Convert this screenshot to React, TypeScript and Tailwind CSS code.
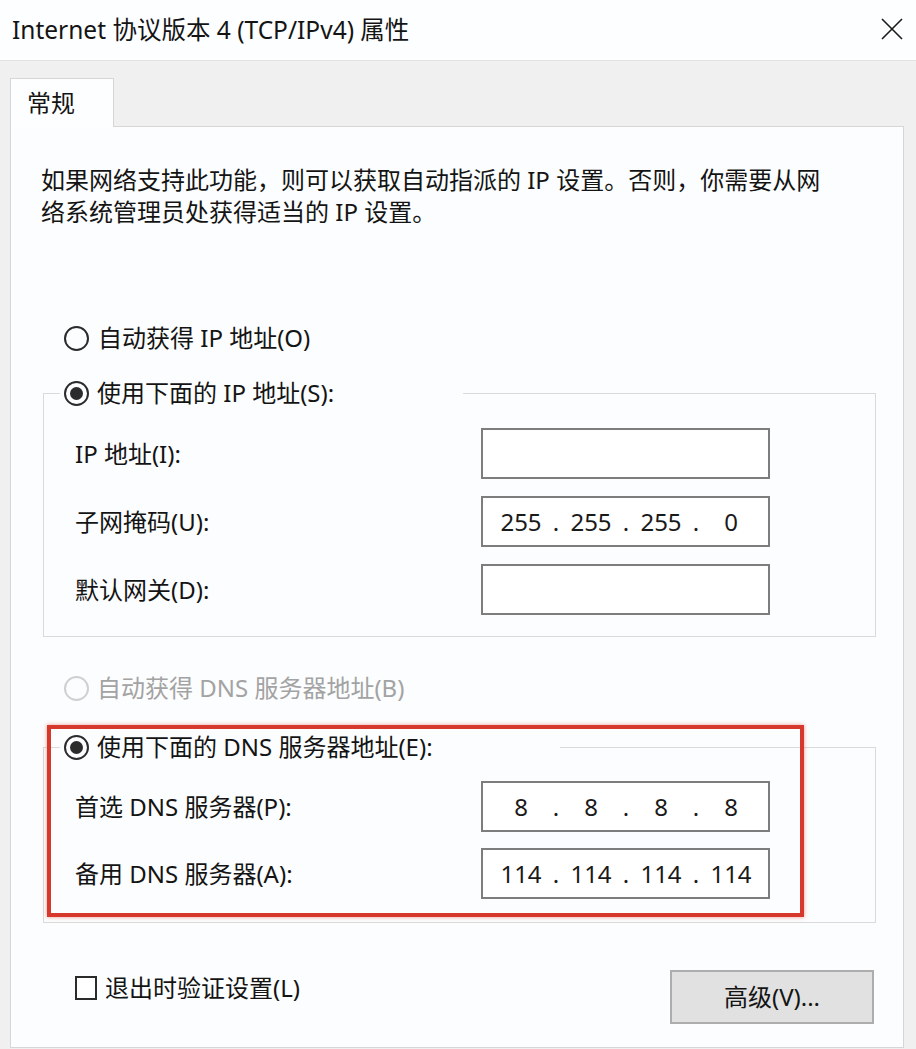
import React from "react";

const FONT = { fontFamily: '"Noto Sans", "Noto Sans CJK SC", sans-serif' };

function Radio({ checked, disabled }: { checked?: boolean; disabled?: boolean }) {
  return (
    <span
      className={
        "flex h-[25px] w-[25px] shrink-0 items-center justify-center rounded-full border-2 " +
        (disabled ? "border-[#d0d0d0]" : "border-[#2b2b2b]")
      }
    >
      {checked && <span className="h-[13px] w-[13px] rounded-full bg-[#2b2b2b]" />}
    </span>
  );
}

function IpBox({ parts }: { parts?: string[] }) {
  return (
    <div className="flex h-[51px] w-[289px] items-center border-2 border-[#7d7d7d] bg-white pl-[10px] text-[24px] text-[#1a1a1a]">
      {parts &&
        parts.map((p, i) => (
          <React.Fragment key={i}>
            <span className="w-[56px] text-center">{p}</span>
            {i < 3 && <span className="w-[14px] text-center">.</span>}
          </React.Fragment>
        ))}
    </div>
  );
}

function Row({ label, parts }: { label: string; parts?: string[] }) {
  return (
    <div className="flex h-[51px] items-center">
      <span className="w-[406px]">{label}</span>
      <IpBox parts={parts} />
    </div>
  );
}

export default function App() {
  return (
    <div
      className="flex h-[1049px] w-[916px] flex-col overflow-hidden bg-[#f0f0f0] text-[24px] leading-[30px] text-[#141414]"
      style={FONT}
    >
      {/* Title bar */}
      <div className="flex h-[61px] shrink-0 items-center justify-between border-b border-[#e2e2e2] bg-[#fdfeff] pl-[12px] pr-[13px]">
        <span className="text-[24.5px]">Internet 协议版本 4 (TCP/IPv4) 属性</span>
        <svg width="22" height="22" viewBox="0 0 22 22" className="mt-[-2px]">
          <path d="M1 1 L21 21 M21 1 L1 21" stroke="#1a1a1a" strokeWidth="1.6" fill="none" />
        </svg>
      </div>

      {/* Tab strip */}
      <div className="flex shrink-0 pl-[10px] pt-[17px]">
        <div className="relative z-10 -mb-px flex h-[49px] w-[104px] items-center border border-b-0 border-[#d6d6d6] bg-[#fdfeff] pl-[16px]">
          常规
        </div>
      </div>

      {/* Panel */}
      <div className="relative mb-px ml-[10px] flex w-[894px] flex-1 flex-col border border-[#d6d6d6] bg-[#fcfdfe]">
        <p className="pl-[30px] pt-[37px] leading-[32px]">
          如果网络支持此功能，则可以获取自动指派的 IP 设置。否则，你需要从网
          <br />
          络系统管理员处获得适当的 IP 设置。
        </p>

        <div className="ml-[53px] mt-[95px] flex h-[30px] items-center gap-[9px]">
          <Radio />
          <span>自动获得 IP 地址(O)</span>
        </div>

        <fieldset className="ml-[32px] mt-[25px] w-[833px] border border-[#dadada] pb-[21px] pt-[20px]">
          <legend className="ml-[16px] flex h-[30px] w-[403px] items-center gap-[8px] pl-[4px]">
            <Radio checked />
            <span>使用下面的 IP 地址(S):</span>
          </legend>
          <div className="flex flex-col gap-[17px] pl-[31px]">
            <Row label="IP 地址(I):" />
            <Row label="子网掩码(U):" parts={["255", "255", "255", "0"]} />
            <Row label="默认网关(D):" />
          </div>
        </fieldset>

        <div className="ml-[53px] mt-[36px] flex h-[30px] items-center gap-[8px] text-[#a3a3a3]">
          <Radio disabled />
          <span>自动获得 DNS 服务器地址(B)</span>
        </div>

        <fieldset className="ml-[32px] mt-[29px] w-[833px] border border-[#dadada] pb-[23px] pt-[19px]">
          <legend className="ml-[16px] flex h-[30px] w-[500px] items-center gap-[8px] pl-[4px]">
            <Radio checked />
            <span>使用下面的 DNS 服务器地址(E):</span>
          </legend>
          <div className="flex flex-col gap-[16px] pl-[31px]">
            <Row label="首选 DNS 服务器(P):" parts={["8", "8", "8", "8"]} />
            <Row label="备用 DNS 服务器(A):" parts={["114", "114", "114", "114"]} />
          </div>
        </fieldset>

        <div className="mt-[47px] flex items-start justify-between pl-[64px] pr-[29px]">
          <div className="mt-[3px] flex h-[30px] items-center gap-[8px]">
            <span className="h-[24px] w-[22px] border-2 border-[#2b2b2b] bg-white" />
            <span>退出时验证设置(L)</span>
          </div>
          <div className="flex h-[54px] w-[204px] items-center justify-center border-2 border-[#adadad] bg-[#e1e1e1]">
            高级(V)...
          </div>
        </div>

        {/* red annotation frame */}
        <div className="pointer-events-none absolute left-[36px] top-[598px] h-[192px] w-[757px] border-[4px] border-[#d6382b] shadow-[0_0_4px_rgba(230,70,50,0.55)]" />
      </div>
    </div>
  );
}
